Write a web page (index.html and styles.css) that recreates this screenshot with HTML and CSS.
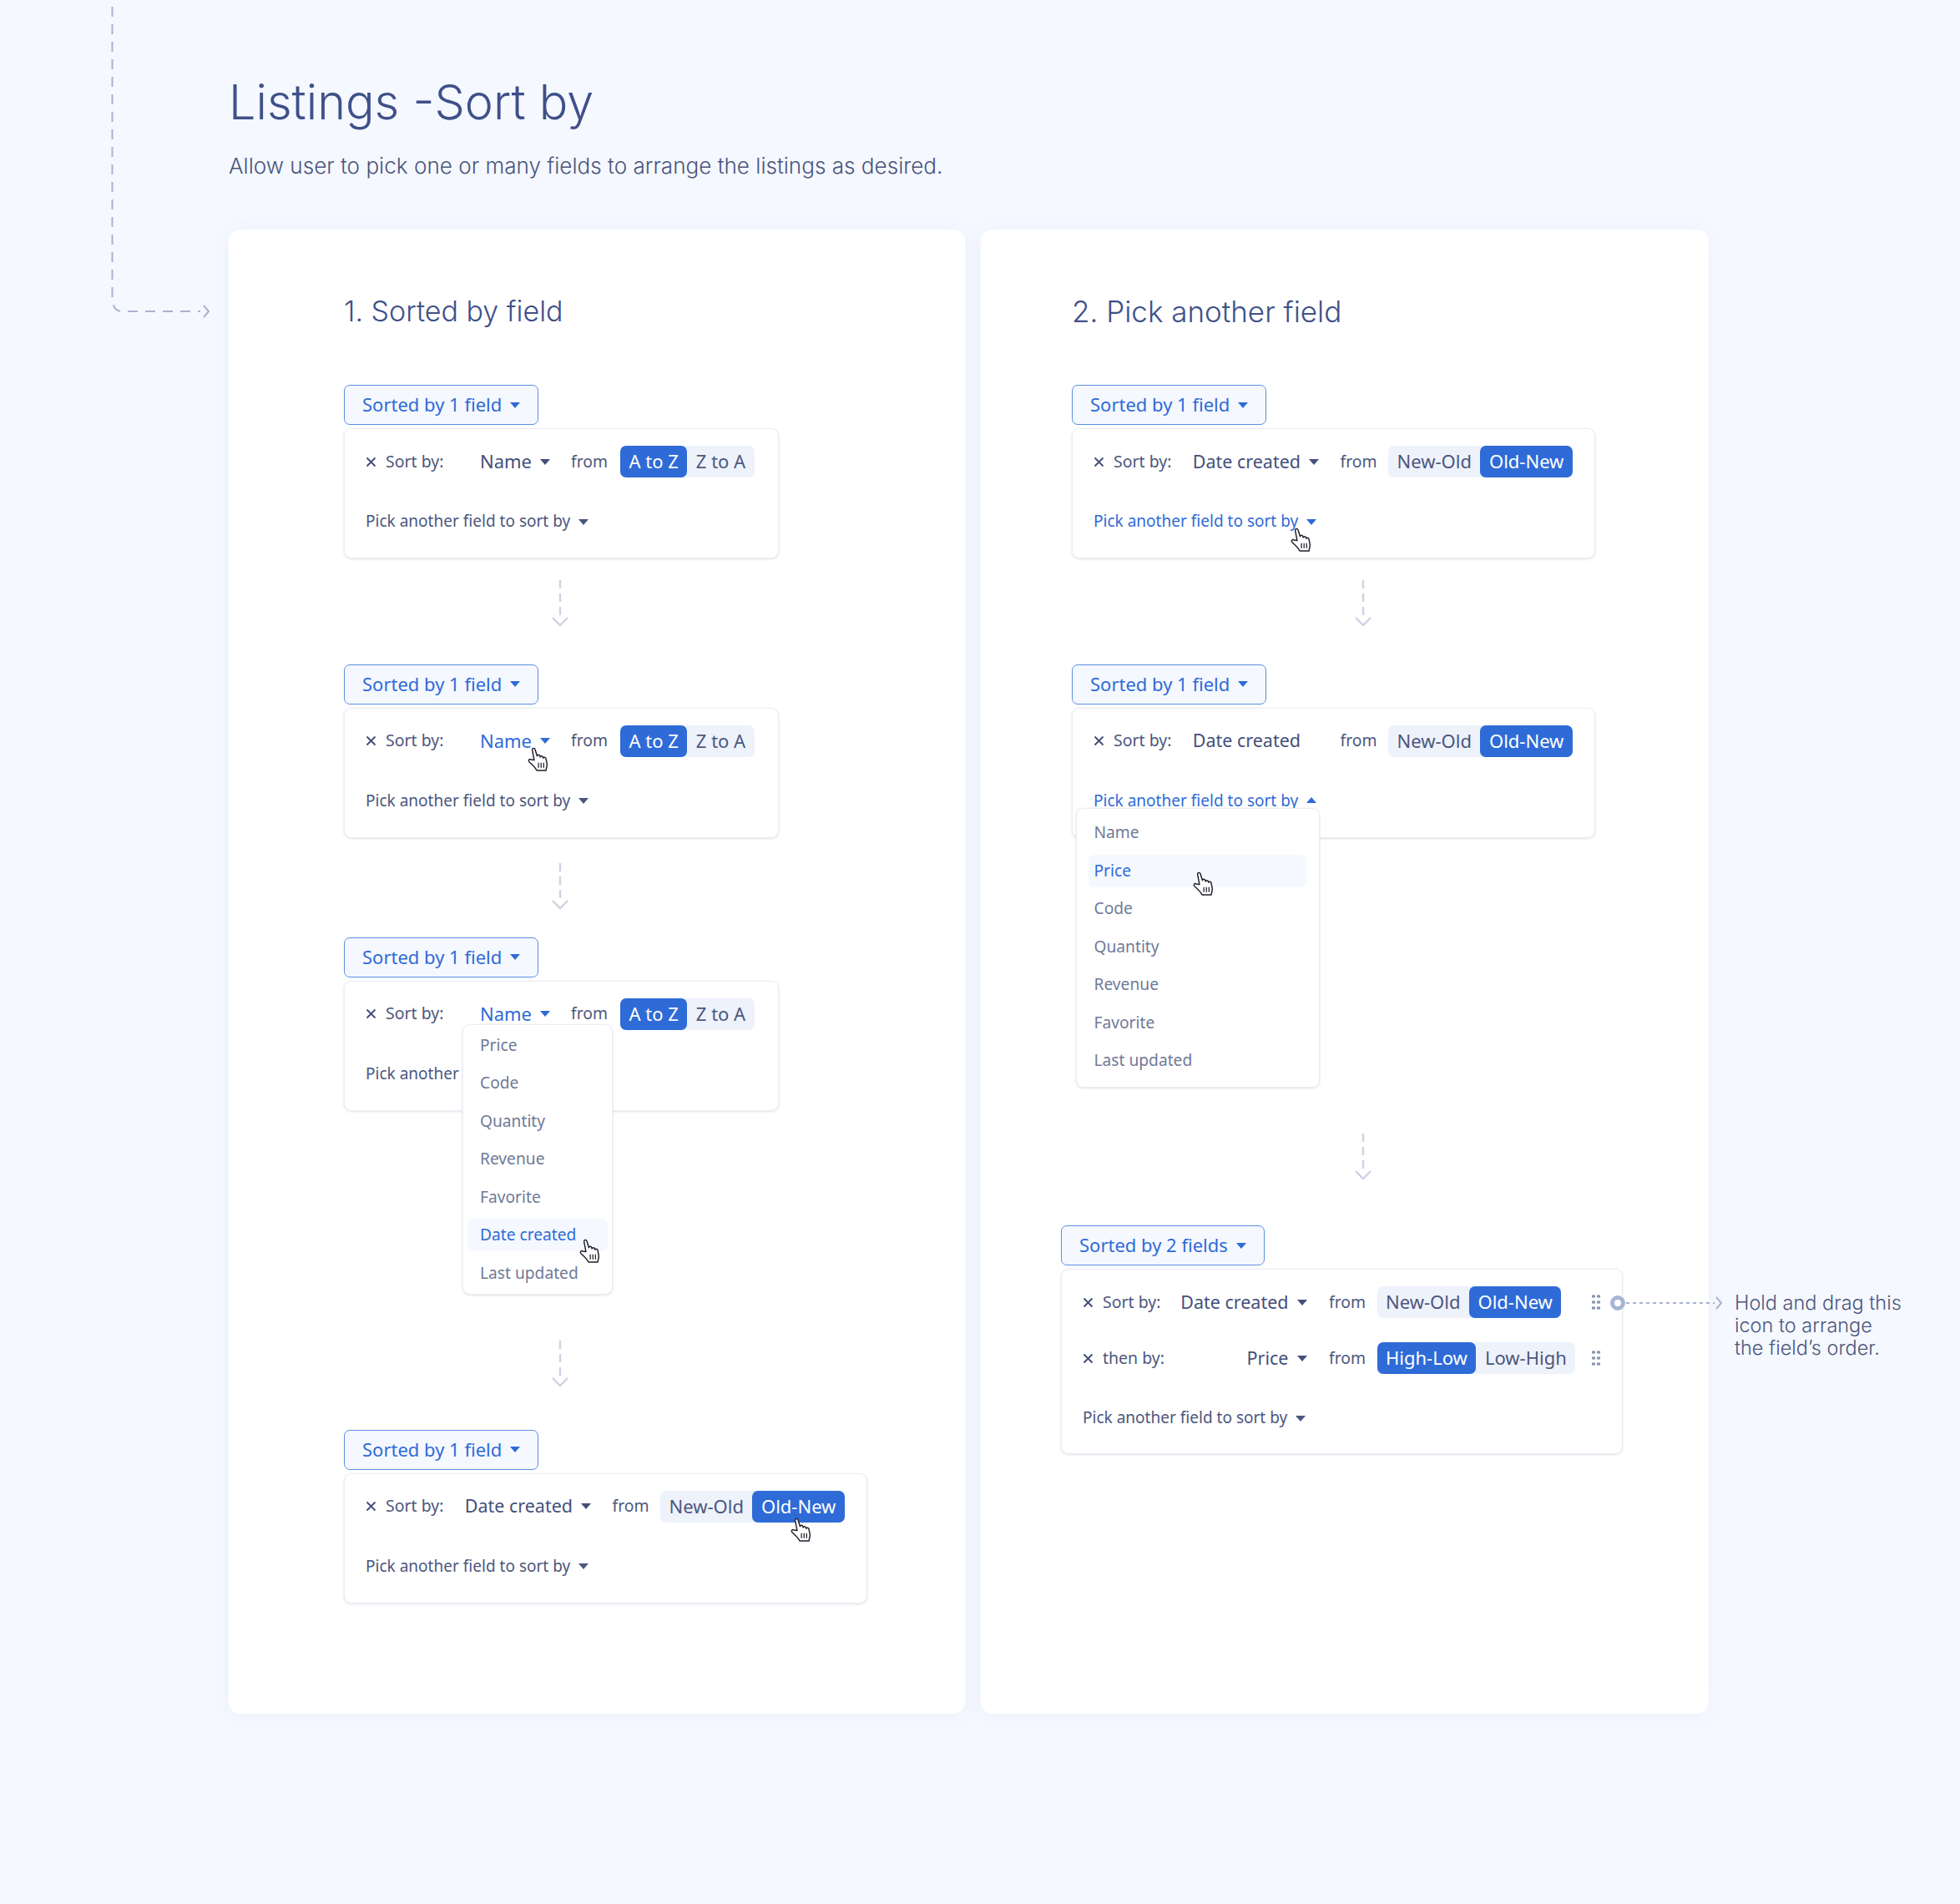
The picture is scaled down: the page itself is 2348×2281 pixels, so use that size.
FILE: index.html
```html
<!DOCTYPE html>
<html lang="en">
<head>
<meta charset="utf-8">
<title>Listings - Sort by</title>
<link rel="stylesheet" href="styles.css">
</head>
<body>
<svg width="0" height="0" class="defs">
  <symbol id="hand" viewBox="1.500 .500 23 28">
    <path d="M8.600 15.500 6.400 4C6 1.600 8.900 1 9.600 3.200L12 10.800C12.200 8.900 14.800 9 15.200 10.800L15.600 12C15.900 10.400 18.300 10.500 18.700 12.200L19 13.200C19.500 11.800 21.800 12 22.200 13.800L23.400 20C23.800 22.300 22.600 24.600 22.200 27.600H11.600C10.400 24.800 7.400 21.600 2.800 17.600 1.200 16 3 13.800 4.900 14.900Z" fill="#fff" stroke="#1d1f27" stroke-width="1.400" stroke-linejoin="round"/>
    <path d="M13.600 18.500v6M16.600 18.500v6M19.600 18.500v6" fill="none" stroke="#1d1f27" stroke-width="1.200"/>
  </symbol>
  <symbol id="close" viewBox="0 0 13 13">
    <path d="M1.500 1.500l10 10M11.500 1.500l-10 10" fill="none" stroke="currentColor" stroke-width="1.800"/>
  </symbol>
  <symbol id="flow" viewBox="0 0 20 56">
    <path d="M10 0V46" fill="none" stroke="#cfd2e2" stroke-width="2.400" stroke-dasharray="10 6"/>
    <path d="M1 45l9 9 9-9" fill="none" stroke="#cfd2e2" stroke-width="2.400"/>
  </symbol>
</svg>

<svg class="connector" viewBox="0 0 160 390" width="160" height="390">
  <path d="M34.500 8V355Q34.500 373 46 373H140" fill="none" stroke="#a9b2d0" stroke-width="2" stroke-dasharray="12 9"/>
  <path d="M144 366l6 7-6 7" fill="none" stroke="#a9b2d0" stroke-width="2"/>
</svg>

<main class="page">
  <h1 class="title">Listings -Sort by</h1>
  <p class="subtitle">Allow user to pick one or many fields to arrange the listings as desired.</p>

  <div class="columns">
    <section class="card card--left">
      <h2 class="card-title">1. Sorted by field</h2>

      <div class="group">
        <button class="toggle">Sorted by 1 field<i class="caret"></i></button>
        <div class="panel panel--w520">
          <div class="row">
            <svg class="clear"><use href="#close"/></svg><span class="label">Sort by:</span>
            <span class="field field--short">Name<i class="caret"></i></span>
            <span class="from from--short">from</span>
            <span class="seg"><b class="opt opt--on">A to Z</b><b class="opt">Z to A</b></span>
          </div>
          <div class="row pick">Pick another field to sort by<i class="caret"></i></div>
        </div>
      </div>

      <svg class="flow flow--a"><use href="#flow"/></svg>

      <div class="group">
        <button class="toggle">Sorted by 1 field<i class="caret"></i></button>
        <div class="panel panel--w520">
          <div class="row">
            <svg class="clear"><use href="#close"/></svg><span class="label">Sort by:</span>
            <span class="field field--short field--hot">Name<i class="caret"></i></span>
            <span class="from from--short">from</span>
            <span class="seg"><b class="opt opt--on">A to Z</b><b class="opt">Z to A</b></span>
          </div>
          <div class="row pick">Pick another field to sort by<i class="caret"></i></div>
        </div>
        <svg class="hand hand--l2"><use href="#hand"/></svg>
      </div>

      <svg class="flow flow--b"><use href="#flow"/></svg>

      <div class="group">
        <button class="toggle">Sorted by 1 field<i class="caret"></i></button>
        <div class="panel panel--w520">
          <div class="row">
            <svg class="clear"><use href="#close"/></svg><span class="label">Sort by:</span>
            <span class="field field--short field--hot">Name<i class="caret"></i></span>
            <span class="from from--short">from</span>
            <span class="seg"><b class="opt opt--on">A to Z</b><b class="opt">Z to A</b></span>
          </div>
          <div class="row pick">Pick another field to sort by<i class="caret"></i></div>
        </div>
        <ul class="menu menu--name">
          <li class="item">Price</li>
          <li class="item">Code</li>
          <li class="item">Quantity</li>
          <li class="item">Revenue</li>
          <li class="item">Favorite</li>
          <li class="item item--on">Date created</li>
          <li class="item">Last updated</li>
        </ul>
        <svg class="hand hand--l3"><use href="#hand"/></svg>
      </div>

      <svg class="flow flow--c"><use href="#flow"/></svg>

      <div class="group">
        <button class="toggle">Sorted by 1 field<i class="caret"></i></button>
        <div class="panel panel--w626">
          <div class="row">
            <svg class="clear"><use href="#close"/></svg><span class="label">Sort by:</span>
            <span class="field">Date created<i class="caret"></i></span>
            <span class="from">from</span>
            <span class="seg"><b class="opt">New-Old</b><b class="opt opt--on">Old-New</b></span>
          </div>
          <div class="row pick">Pick another field to sort by<i class="caret"></i></div>
        </div>
        <svg class="hand hand--l4"><use href="#hand"/></svg>
      </div>
    </section>

    <section class="card card--right">
      <h2 class="card-title">2. Pick another field</h2>

      <div class="group">
        <button class="toggle">Sorted by 1 field<i class="caret"></i></button>
        <div class="panel panel--w626">
          <div class="row">
            <svg class="clear"><use href="#close"/></svg><span class="label">Sort by:</span>
            <span class="field">Date created<i class="caret"></i></span>
            <span class="from">from</span>
            <span class="seg"><b class="opt">New-Old</b><b class="opt opt--on">Old-New</b></span>
          </div>
          <div class="row pick pick--hot">Pick another field to sort by<i class="caret"></i></div>
        </div>
        <svg class="hand hand--r1"><use href="#hand"/></svg>
      </div>

      <svg class="flow flow--a flow--r"><use href="#flow"/></svg>

      <div class="group">
        <button class="toggle">Sorted by 1 field<i class="caret"></i></button>
        <div class="panel panel--w626">
          <div class="row">
            <svg class="clear"><use href="#close"/></svg><span class="label">Sort by:</span>
            <span class="field">Date created<i class="caret caret--hidden"></i></span>
            <span class="from">from</span>
            <span class="seg"><b class="opt">New-Old</b><b class="opt opt--on">Old-New</b></span>
          </div>
          <div class="row pick pick--hot">Pick another field to sort by<i class="caret caret--up"></i></div>
        </div>
        <ul class="menu menu--pick">
          <li class="item">Name</li>
          <li class="item item--on">Price</li>
          <li class="item">Code</li>
          <li class="item">Quantity</li>
          <li class="item">Revenue</li>
          <li class="item">Favorite</li>
          <li class="item">Last updated</li>
        </ul>
        <svg class="hand hand--r2"><use href="#hand"/></svg>
      </div>

      <svg class="flow flow--d flow--r"><use href="#flow"/></svg>

      <div class="group group--two">
        <button class="toggle toggle--two">Sorted by 2 fields<i class="caret"></i></button>
        <div class="panel panel--w673">
          <div class="row">
            <svg class="clear"><use href="#close"/></svg><span class="label">Sort by:</span>
            <span class="field">Date created<i class="caret"></i></span>
            <span class="from">from</span>
            <span class="seg"><b class="opt">New-Old</b><b class="opt opt--on">Old-New</b></span>
            <span class="drag"></span>
          </div>
          <div class="row row--then">
            <svg class="clear"><use href="#close"/></svg><span class="label">then by:</span>
            <span class="field">Price<i class="caret"></i></span>
            <span class="from">from</span>
            <span class="seg"><b class="opt opt--on">High-Low</b><b class="opt">Low-High</b></span>
            <span class="drag"></span>
          </div>
          <div class="row pick">Pick another field to sort by<i class="caret"></i></div>
        </div>
        <div class="note">
          <span class="knob"></span>
          <svg class="note-line" width="126" height="16" viewBox="0 0 126 16">
            <path d="M0 8H106" fill="none" stroke="#a9b2d0" stroke-width="2" stroke-dasharray="4 4"/>
            <path d="M108 1l6 7-6 7" fill="none" stroke="#a9b2d0" stroke-width="2"/>
          </svg>
          <p class="note-text">Hold and drag this<br>icon to arrange<br>the field’s order.</p>
        </div>
      </div>
    </section>
  </div>
</main>
</body>
</html>
```

FILE: styles.css
```css
* { box-sizing: border-box; }

html, body { margin: 0; padding: 0; }

body {
  position: relative;
  min-height: 2281px;
  background: #f5f8ff;
  color: #3f4c78;
  font-family: "Noto Sans", "Open Sans", sans-serif;
}

.defs { position: absolute; }

.connector {
  position: absolute;
  left: 100px;
  top: 0;
  overflow: visible;
}

.page { padding: 87px 0 0 274px; }

.title {
  margin: 0;
  font-family: Inter, sans-serif;
  font-size: 57.500px;
  line-height: 70px;
  font-weight: 350;
  color: #3f5089;
  white-space: nowrap;
}

.subtitle {
  margin: 24px 0 58px;
  font-family: Inter, sans-serif;
  font-size: 26.100px;
  line-height: 36px;
  font-weight: 300;
  color: #49557c;
  white-space: nowrap;
}

.columns { display: flex; gap: 19px; align-items: stretch; }

.card {
  height: 1778px;
  background: #fff;
  border-radius: 14px;
  box-shadow: 0 2px 24px rgba(70, 100, 170, .05);
  padding-top: 74px;
}

.card--left { width: 882px; padding-left: 138px; }
.card--right { width: 872px; padding-left: 109px; }

.card-title {
  margin: 0 0 64px;
  font-family: Inter, sans-serif;
  font-size: 34px;
  line-height: 48px;
  font-weight: 350;
  color: #3f5089;
}

.card--right .card-title { font-size: 35px; }

.group { position: relative; }

.group--two { margin-left: -13px; }

.toggle {
  display: flex;
  align-items: center;
  width: 233px;
  height: 48px;
  padding: 0 0 2px 21px;
  border: 1.500px solid #5a8fe0;
  border-radius: 7px;
  background: #f5f8ff;
  color: #2f6bd6;
  font: inherit;
  font-size: 22px;
  white-space: nowrap;
}

.toggle--two { width: 244px; }

.panel {
  margin-top: 4px;
  padding: 20px 26px 24px 25px;
  height: 156px;
  background: #fff;
  border: 1px solid #ebedf3;
  border-radius: 9px;
  box-shadow: 0 1px 3px rgba(60, 75, 120, .16);
}

.panel--w520 { width: 521px; }
.panel--w626 { width: 627px; }
.panel--w673 { width: 673px; height: 222px; }

.row {
  display: flex;
  align-items: center;
  height: 38px;
  white-space: nowrap;
}

.row--then { margin-top: 29px; }

.clear { width: 13px; height: 13px; margin-right: 11px; color: #3f4c78; }

.label { width: 71px; padding-bottom: 2px; font-size: 19.500px; color: #4c577d; }

.field {
  display: flex;
  align-items: center;
  justify-content: flex-end;
  width: 175px;
  padding-bottom: 2px;
  font-size: 21.500px;
  color: #44507a;
}

.group--two .field { width: 173.500px; }

.field--short { width: 126px; font-size: 22px; }
.field--hot { color: #2f6bd6; }

.from {
  width: 43px;
  margin: 0 14.500px 0 25.500px;
  padding-bottom: 2px;
  font-size: 19.300px;
  color: #4c577d;
}

.from--short { margin: 0 16px 0 25px; }

.group--two .from { margin-left: 26.500px; }

.seg {
  display: flex;
  height: 38px;
  border-radius: 7px;
  background: #edf2fb;
}

.opt {
  display: flex;
  align-items: center;
  padding: 0 10.500px 2px;
  border-radius: 7px;
  font-size: 22px;
  font-weight: 400;
  color: #4c577d;
}

.opt--on { background: #2f6bd6; color: #fff; }

.drag {
  width: 10px;
  height: 20px;
  margin-left: auto;
  background-image: radial-gradient(circle, #8a93ad 1.800px, transparent 2.100px);
  background-size: 6px 7px;
  background-position: -1px -.500px;
}

.pick { margin-top: 34px; padding-bottom: 2px; font-size: 19.050px; color: #4c577d; }
.pick--hot { color: #2f6bd6; }

.caret {
  flex: none;
  width: 0;
  height: 0;
  margin: 2px 0 0 10px;
  border-left: 6px solid transparent;
  border-right: 6px solid transparent;
  border-top: 7px solid currentColor;
}

.caret--up { border-top: 0; border-bottom: 7px solid currentColor; margin-top: 0; }
.caret--hidden { visibility: hidden; }

.flow { display: block; width: 20px; height: 56px; margin-left: 249px; }
.flow--r { margin-left: 339px; }
.flow--a { margin-top: 26px; margin-bottom: 44.500px; }
.flow--b { margin-top: 30px; margin-bottom: 33px; }
.flow--c { margin-top: 275px; margin-bottom: 51px; }
.flow--d { margin-top: 354px; margin-bottom: 54.500px; }

.menu {
  position: absolute;
  margin: 0;
  list-style: none;
  display: flex;
  flex-direction: column;
  gap: 6.500px;
  background: #fff;
  border: 1px solid #ebedf3;
  border-radius: 9px;
  box-shadow: 0 1px 3px rgba(60, 75, 120, .16);
}

.menu--name { left: 142px; top: 104px; width: 180px; padding: 5px 5px; }
.menu--pick { left: 4.500px; top: 172.500px; width: 292px; height: 335px; padding: 9px 15px 0 14px; }

.item {
  display: flex;
  align-items: center;
  height: 39px;
  padding: 0 0 2px 15px;
  border-radius: 7px;
  font-size: 19.200px;
  color: #707a97;
  white-space: nowrap;
}

.menu--pick .item { padding-left: 7px; }

.item--on { background: #f5f8ff; color: #2f6bd6; }

.hand { position: absolute; width: 27px; height: 29px; }
.hand--l2 { left: 219px; top: 99px; }
.hand--l3 { left: 281px; top: 361px; }
.hand--l4 { left: 534px; top: 105px; }
.hand--r1 { left: 261px; top: 171px; }
.hand--r2 { left: 144px; top: 248px; }

.note { position: absolute; left: 658px; top: 84px; }

.knob {
  position: absolute;
  left: 0;
  top: 0;
  width: 18px;
  height: 18px;
  border: 5px solid #a9b5d6;
  border-radius: 50%;
  background: #fff;
}

.note-line { position: absolute; left: 19px; top: 1px; }

.note-text {
  position: absolute;
  left: 149px;
  top: -5px;
  margin: 0;
  font-family: Inter, sans-serif;
  font-size: 23.500px;
  line-height: 27px;
  font-weight: 300;
  color: #4c577d;
  white-space: nowrap;
}
```
